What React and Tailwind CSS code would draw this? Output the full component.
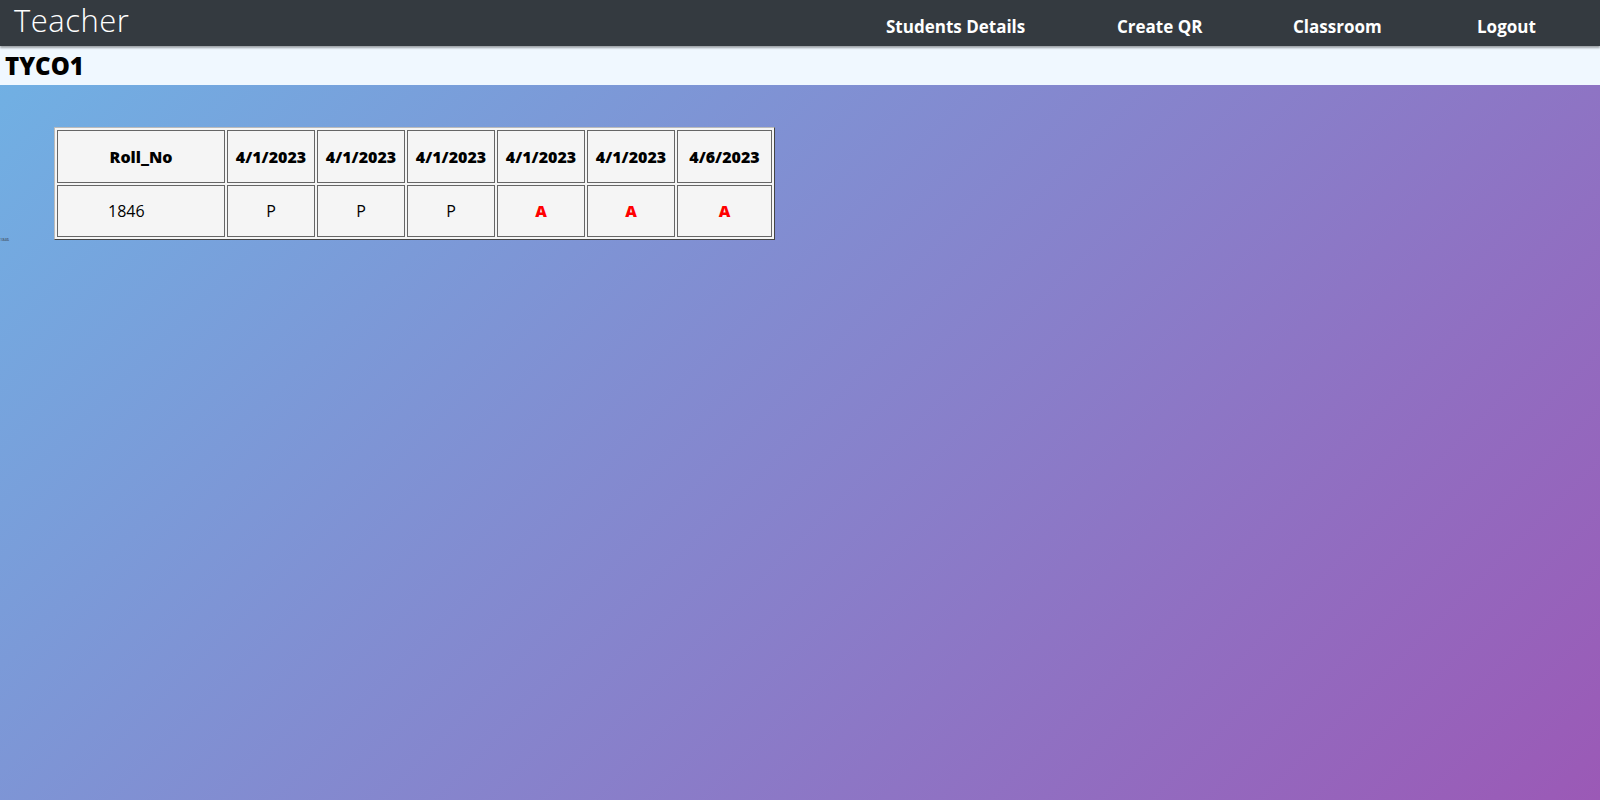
import React from 'react';

const dates = ['4/1/2023', '4/1/2023', '4/1/2023', '4/1/2023', '4/1/2023', '4/6/2023'];
const marks = ['P', 'P', 'P', 'A', 'A', 'A'];
const widths = ['w-[88px]', 'w-[88px]', 'w-[88px]', 'w-[88px]', 'w-[88px]', 'w-[95px]'];

const font = { fontFamily: '"Open Sans", "Liberation Sans", sans-serif' };

export default function App() {
  return (
    <div className="min-h-[800px] flex flex-col bg-[linear-gradient(135deg,#6fb3e5,#9b59b6)]" style={font}>
      {/* Navbar */}
      <nav className="h-[46px] bg-[#343a40] flex items-center shadow-[0_2px_2px_rgba(0,0,0,0.35)] relative z-10">
        <span className="ml-[14px] text-[31px] font-light text-white tracking-[0.5px] leading-none -mt-[6px]">Teacher</span>
        <div className="ml-auto flex items-center text-white font-bold text-[17px] mt-[7px]">
          <a className="w-[231px]">Students Details</a>
          <a className="w-[176px]">Create QR</a>
          <a className="w-[184px]">Classroom</a>
          <a className="w-[123px]">Logout</a>
        </div>
      </nav>

      {/* Class header */}
      <div className="h-[39px] bg-[#f0f8ff] flex items-center px-[5px]">
        <h1 className="text-[24px] font-extrabold text-black leading-none">TYCO1</h1>
      </div>

      {/* Attendance */}
      <div className="flex items-end pt-[42px]">
        <span className="text-[4px] leading-none text-[#333] -mb-[2px] w-[54px]">1846</span>
        <table className="border-separate border-spacing-[2px] bg-[#f5f5f5] border border-t-[#bbb] border-l-[#bbb] border-r-[#444] border-b-[#444] text-black text-[16px]">
          <thead>
            <tr>
              <th className="w-[168px] h-[53px] border border-[#666] font-extrabold">Roll_No</th>
              {dates.map((d, i) => (
                <th key={i} className={`${widths[i]} h-[53px] border border-[#666] font-extrabold`}>{d}</th>
              ))}
            </tr>
          </thead>
          <tbody>
            <tr>
              <td className="h-[52px] border border-[#666] pl-[50px] text-left">1846</td>
              {marks.map((m, i) => (
                <td
                  key={i}
                  className={m === 'A' ? 'border border-[#666] text-center font-extrabold text-[#ff0000]' : 'border border-[#666] text-center'}
                >
                  {m}
                </td>
              ))}
            </tr>
          </tbody>
        </table>
      </div>
    </div>
  );
}
